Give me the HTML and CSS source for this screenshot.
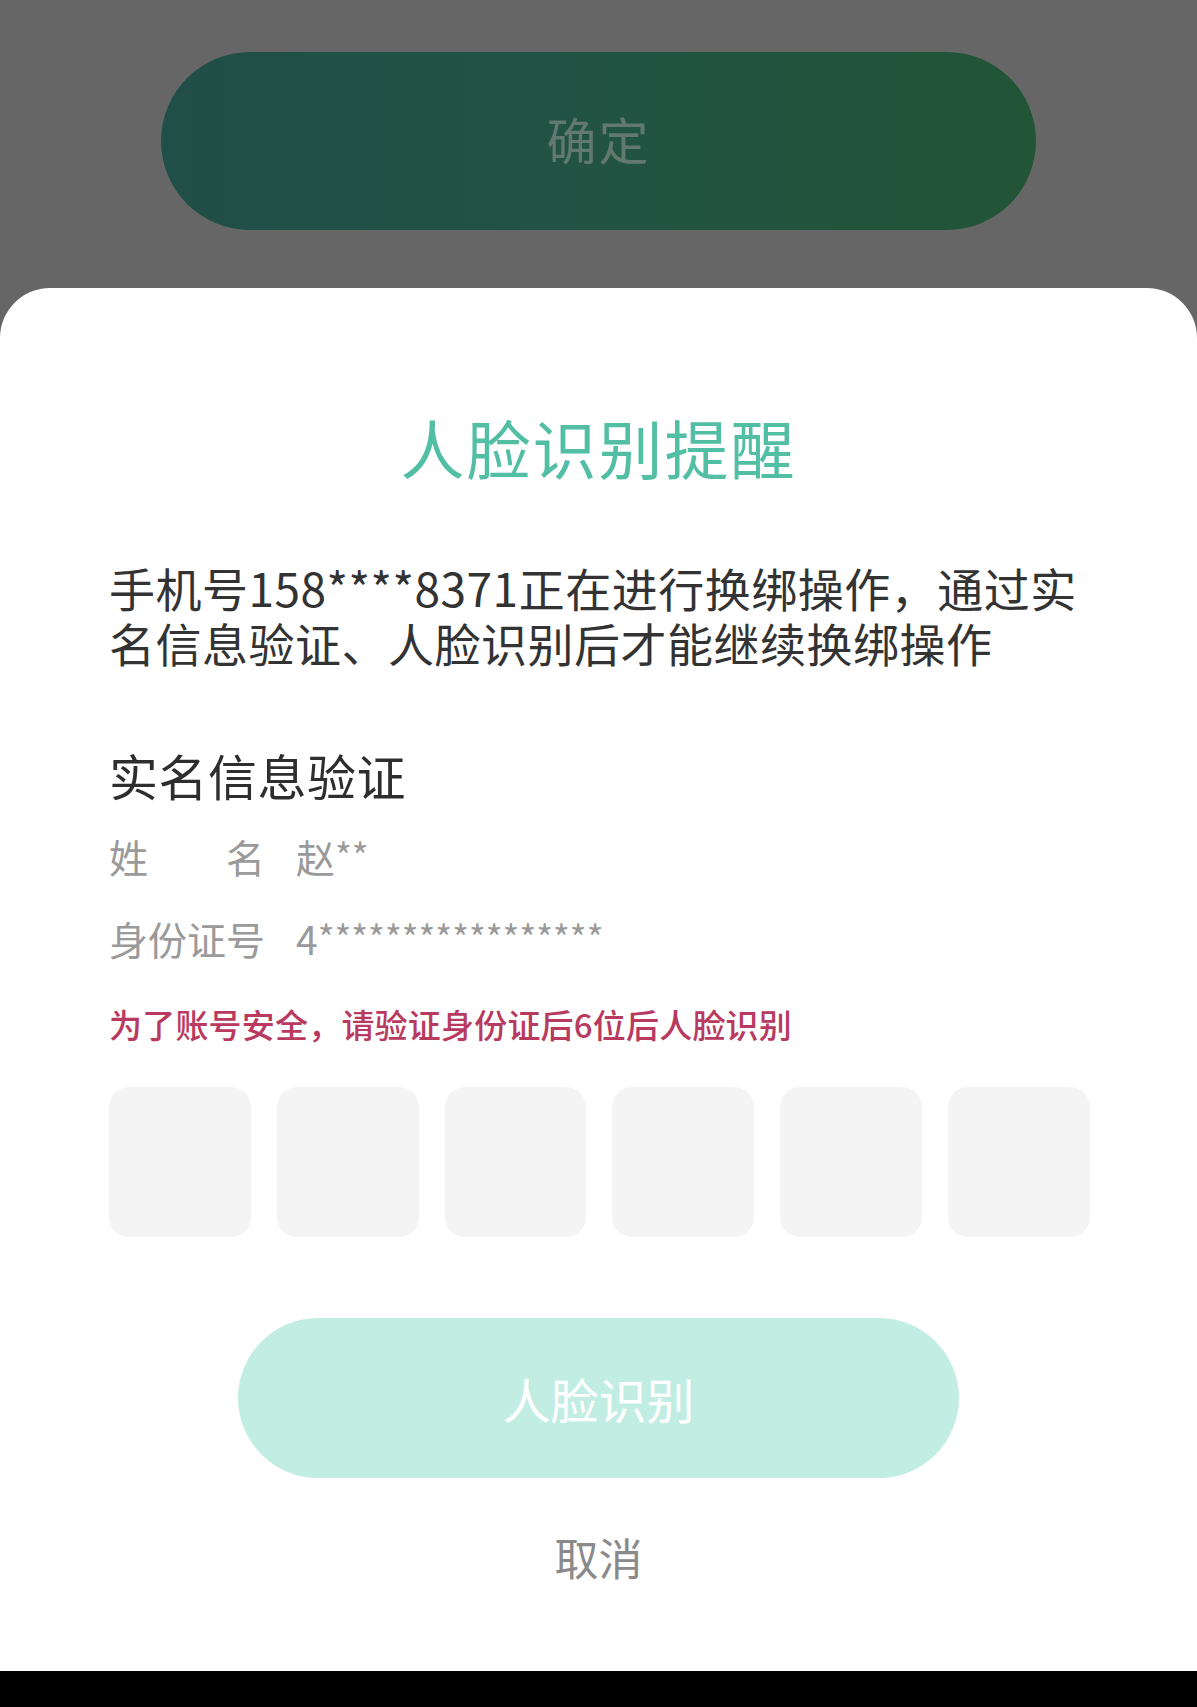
FILE: index.html
```html
<!DOCTYPE html>
<html lang="zh-CN">
<head>
<meta charset="utf-8">
<title>人脸识别提醒</title>
<link rel="stylesheet" href="styles.css">
</head>
<body>
<div class="screen">
  <div class="backdrop">
    <div class="confirm-btn">确定</div>
  </div>
  <div class="sheet">
    <h1 class="title">人脸识别提醒</h1>
    <p class="desc">手机号158****8371正在进行换绑操作，通过实名信息验证、人脸识别后才能继续换绑操作</p>
    <h2 class="section">实名信息验证</h2>
    <div class="row">
      <span class="label justify">姓<span class="sp"></span>名</span>
      <span class="value">赵<span class="stars">**</span></span>
    </div>
    <div class="row row2">
      <span class="label">身份证号</span>
      <span class="value">4<span class="stars">*****************</span></span>
    </div>
    <p class="warn">为了账号安全，请验证身份证后6位后人脸识别</p>
    <div class="codes">
      <div class="code"></div>
      <div class="code"></div>
      <div class="code"></div>
      <div class="code"></div>
      <div class="code"></div>
      <div class="code"></div>
    </div>
    <div class="face-btn">人脸识别</div>
    <div class="cancel">取消</div>
  </div>
  <div class="navbar"></div>
</div>
</body>
</html>
```
FILE: styles.css
```css
* { box-sizing: border-box; }
html, body {
  margin: 0;
  padding: 0;
}
body {
  width: 1197px;
  height: 1707px;
  overflow: hidden;
  background: #666666;
  font-family: "Noto Sans CJK SC", "Noto Sans", sans-serif;
}
.screen {
  display: flex;
  flex-direction: column;
  height: 1707px;
}
.backdrop {
  height: 288px;
  padding-top: 52px;
  display: flex;
  justify-content: center;
  background: #666666;
}
.confirm-btn {
  width: 875px;
  height: 178px;
  border-radius: 89px;
  background: linear-gradient(90deg, #204e48 0%, #225442 60%, #225436 100%);
  color: #62796f;
  font-size: 50px;
  line-height: 172px;
  text-align: center;
  letter-spacing: 2px;
}
.sheet {
  flex: 1;
  background: #ffffff;
  border-radius: 50px 50px 0 0;
  padding: 118px 0 0 109px;
  display: flex;
  flex-direction: column;
}
.title {
  margin: 0 0 0 -109px;
  font-size: 64px;
  line-height: 80px;
  font-weight: 400;
  color: #52bfa4;
  text-align: center;
  letter-spacing: 2px;
}
.desc {
  margin: 74px 0 0 0;
  width: 990px;
  font-size: 46px;
  line-height: 55px;
  color: #333333;
  letter-spacing: 0.5px;
}
.section {
  margin: 75px 0 0 0;
  font-size: 49px;
  line-height: 60px;
  font-weight: 400;
  color: #2e2e2e;
  letter-spacing: 0.5px;
}
.row {
  margin-top: 26px;
  display: flex;
  align-items: center;
  height: 50px;
  font-size: 39px;
  line-height: 50px;
  color: #9a9a9a;
  white-space: nowrap;
}
.row2 { margin-top: 32px; }
.label {
  width: 156px;
  flex: none;
}
.justify {
  display: flex;
  justify-content: space-between;
}
.sp { flex: 1; }
.value {
  margin-left: 31px;
}
.stars {
  font-size: 36px;
  position: relative;
  top: -3px;
}
.warn {
  margin: 39px 0 0 0;
  font-size: 33px;
  line-height: 44px;
  color: #b93a5f;
  font-weight: 500;
  letter-spacing: 0.2px;
}
.codes {
  margin-top: 41px;
  width: 981px;
  display: flex;
  gap: 26px;
}
.code {
  flex: 1;
  height: 150px;
  border-radius: 20px;
  background: #f4f4f4;
}
.face-btn {
  margin: 81px 0 0 129px;
  width: 721px;
  height: 160px;
  border-radius: 80px;
  background: #c2ede3;
  color: #ffffff;
  font-size: 48px;
  line-height: 160px;
  text-align: center;
}
.cancel {
  margin: 51px 0 0 -109px;
  font-size: 44px;
  line-height: 56px;
  text-align: center;
  color: #8a8a8a;
}
.navbar {
  height: 36px;
  flex: none;
  background: #000000;
}
```
